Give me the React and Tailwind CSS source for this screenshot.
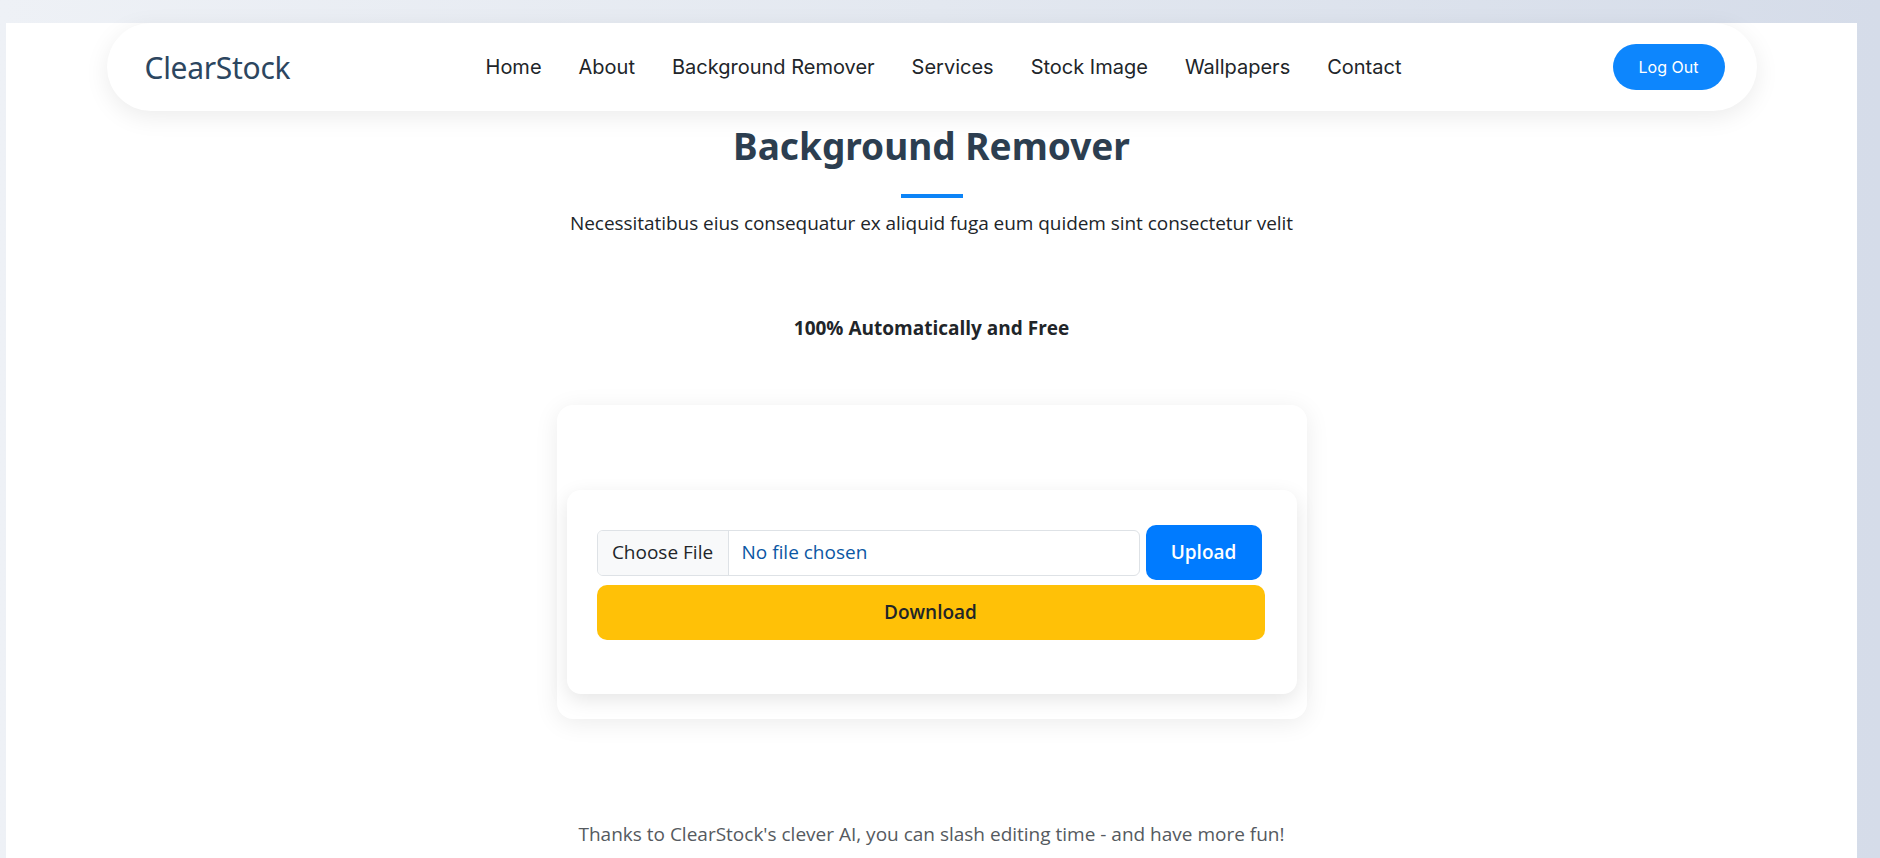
export default function App() {
  const links = ["Home", "About", "Background Remover", "Services", "Stock Image", "Wallpapers", "Contact"];

  return (
    <div className="h-[858px] overflow-hidden bg-linear-to-r from-[#eef1f6] via-[#e3e8f0] to-[#d5dce9] pt-[23px] pl-[6px] font-['Open_Sans',sans-serif]">
      <div className="w-[1851px] h-[835px] bg-white">
        {/* NAVBAR */}
        <nav className="mx-auto w-[1650px] h-[88px] rounded-full bg-white shadow-[0_6px_24px_rgba(0,0,0,0.08)] flex items-center pl-[38px] pr-[32px]">
          <div className="w-[160px] text-[30px] text-[#2c4660] font-['Noto_Sans',sans-serif] tracking-[-0.3px]">ClearStock</div>
          <ul className="flex-1 flex justify-center gap-[37px] pr-[30px] font-['Inter',sans-serif] text-[20px] text-[#212529]">
            {links.map((l) => (
              <li key={l}>{l}</li>
            ))}
          </ul>
          <button className="w-[112px] h-[46px] rounded-full bg-[#0d86fd] text-white text-[16px] font-['Inter',sans-serif]">
            Log Out
          </button>
        </nav>

        {/* HERO */}
        <div className="flex flex-col items-center">
          <h1 className="mt-[11px] text-[37px] leading-[48px] font-bold text-[#2c3e50] font-['Noto_Sans',sans-serif]">
            Background Remover
          </h1>
          <div className="mt-[24px] w-[62px] h-[4px] bg-[#0d84f7]" />
          <p className="mt-[12px] text-[19px] leading-[26px] text-[#212529] tracking-[-0.05px]">
            Necessitatibus eius consequatur ex aliquid fuga eum quidem sint consectetur velit
          </p>
          <p className="mt-[79px] text-[19px] leading-[26px] font-bold text-[#212529]">100% Automatically and Free</p>

          {/* CARD */}
          <div className="mt-[64px] w-[750px] h-[314px] rounded-[16px] bg-white shadow-[0_4px_24px_rgba(0,0,0,0.08)] px-[10px] pt-[85px]">
            <div className="h-[204px] rounded-[14px] bg-white shadow-[0_6px_20px_rgba(0,0,0,0.1)] pl-[30px] pr-[32px] pt-[35px]">
              <div className="flex items-center gap-[6px]">
                <div className="flex-1 h-[46px] flex items-stretch rounded-[6px] border border-[#dee2e6] overflow-hidden text-[19px]">
                  <span className="w-[131px] flex items-center justify-center bg-[#f8f9fa] border-r border-[#dee2e6] text-[#212529]">
                    Choose File
                  </span>
                  <span className="flex items-center pl-[13px] text-[#0b57a4]">No file chosen</span>
                </div>
                <button className="w-[116px] h-[55px] rounded-[10px] bg-[#007bff] text-white text-[19px] font-semibold mr-[3px]">
                  Upload
                </button>
              </div>
              <button className="mt-[5px] w-full h-[55px] rounded-[10px] bg-[#ffc107] text-[#212529] text-[19px] font-semibold">
                Download
              </button>
            </div>
          </div>

          <p className="mt-[102px] text-[19px] leading-[26px] text-[#555a60]">
            Thanks to ClearStock's clever AI, you can slash editing time - and have more fun!
          </p>
        </div>
      </div>
    </div>
  );
}
